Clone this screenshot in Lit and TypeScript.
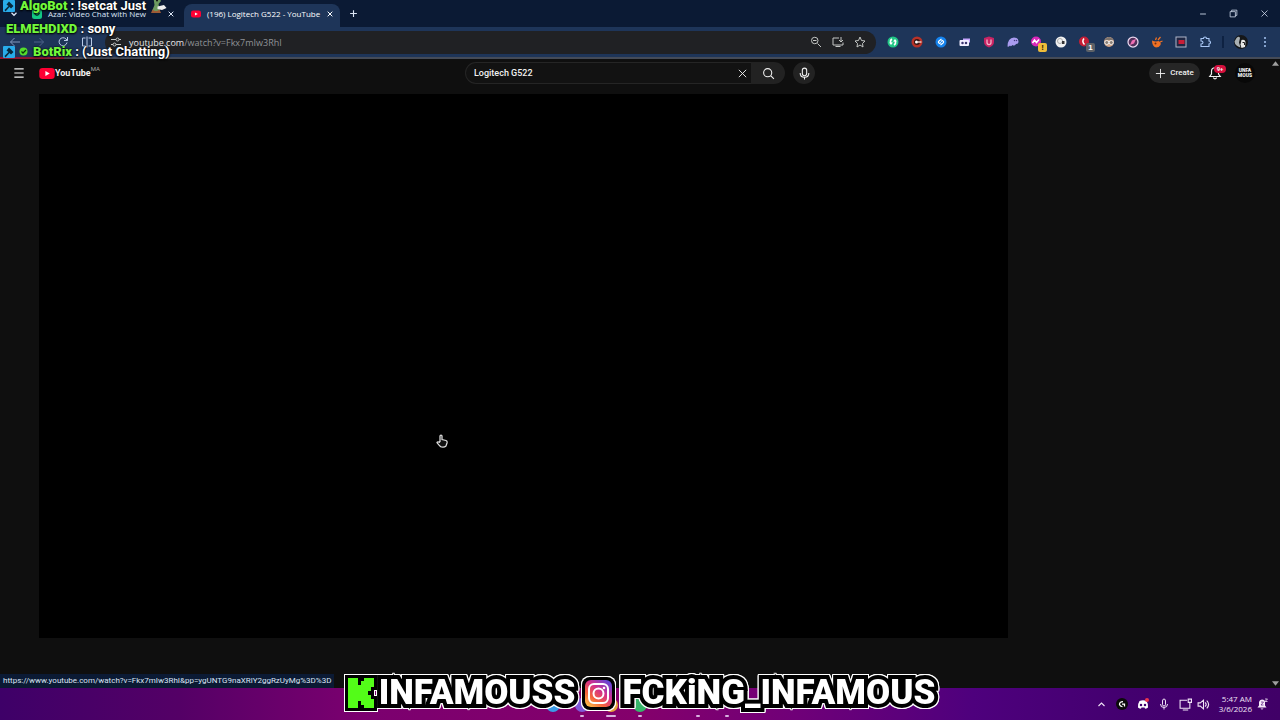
import { LitElement, html, css, svg } from "lit";
import { customElement } from "lit/decorators.js";

const line = (d: string, size = 12, view = 24, w = 2) => html`<svg
  class="line" width=${size} height=${size} viewBox="0 0 ${view} ${view}" stroke-width=${w} aria-hidden="true"
>${svg`<path d=${d} />`}</svg>`;

const play = (w: number, h: number) => html`<svg width=${w} height=${h} viewBox="0 0 28 20" aria-hidden="true">
  <rect width="28" height="20" rx="6" fill="#ff0033" /><path d="M11 5.500l8 4.500-8 4.500z" fill="#fff" /></svg>`;

const shapes = [
  { name: "Sync", art: svg`<circle cx="12" cy="12" r="11" fill="#21c786"/><path d="M10 6q-5 3-2 9M14 18q5-3 2-9" stroke="#fff" stroke-width="3" fill="none"/><path d="M4 13h8l-4 5zM12 11h8l-4-5z" fill="#fff"/>` },
  { name: "Recorder", art: svg`<circle cx="12" cy="12" r="11" fill="#b83228"/><circle cx="12" cy="12" r="6" fill="#301414"/><circle cx="11" cy="12" r="3" fill="#fff"/><path d="M12 12h9" stroke="#e9c9c5" stroke-width="3"/>` },
  { name: "Shazam", art: svg`<circle cx="12" cy="12" r="11" fill="#1583ee"/><path d="M13 6l-5 4q-3 3 1 5l3-2M11 18l5-4q3-3-1-5l-3 2" stroke="#fff" stroke-width="2.200" fill="none"/>` },
  { name: "Camera", art: svg`<path d="M8 5h14v8H8z" fill="#c7a6ff"/><rect x="1" y="8" width="19" height="12" rx="2" fill="#f2eeff"/><circle cx="7" cy="14" r="2.500" fill="#3a3470"/><circle cx="14" cy="14" r="2.500" fill="#3a3470"/>` },
  { name: "Shield", art: svg`<path d="M12 1l10 3v8q0 7-10 11Q2 19 2 12V4z" fill="#c82463"/><path d="M8 7v6q0 4 4 4t4-4V7" stroke="#f3b5cb" stroke-width="2.500" fill="none"/>` },
  { name: "Phantom", art: svg`<path d="M1 21Q1 4 14 3q9 0 9 8 0 5-5 5-3 5-7 2-3 4-5 1-2 3-5 2z" fill="#a99cf0"/><circle cx="15" cy="9" r="1.500" fill="#443a80"/><circle cx="19" cy="9" r="1.500" fill="#443a80"/>` },
  { name: "Monitor", art: svg`<circle cx="10" cy="11" r="10" fill="#d928b8"/><path d="M3 14l4-6 4 5 5-6" stroke="#fff" stroke-width="3" fill="none"/>`, tag: "!", tone: "warn" },
  { name: "Eyes", art: svg`<circle cx="12" cy="12" r="11" fill="#f1f1f1"/><circle cx="10" cy="10" r="5" fill="none" stroke="#aaa" stroke-width="2"/><path d="M14 10h5v6h-5z" fill="#333"/>` },
  { name: "Blocker", art: svg`<circle cx="10" cy="11" r="10" fill="#c51e36"/><path d="M10 5q-5 6 1 12" stroke="#fff" stroke-width="3" fill="none"/>`, tag: "1", tone: "count" },
  { name: "Glasses", art: svg`<circle cx="12" cy="12" r="10" fill="#d3a78a"/><path d="M3 8q9-12 18 0z" fill="#7c736d"/><circle cx="7.500" cy="13" r="4" fill="#8c8077" stroke="#eee" stroke-width="2"/><circle cx="16.500" cy="13" r="4" fill="#8c8077" stroke="#eee" stroke-width="2"/>` },
  { name: "Compass", art: svg`<circle cx="12" cy="12" r="10" fill="#53305b" stroke="#ead7ee" stroke-width="2.500"/><path d="M6 18l4-9 8-3-4 9z" fill="#ef6fb4"/>` },
  { name: "Fireball", art: svg`<path d="M2 9q7 3 13 1 6 2 4 8-3 5-9 5-8-2-8-14z" fill="#f07124"/><path d="M9 8l2-5M14 8l5-6M18 12l5-2" stroke="#f07124" stroke-width="2.500"/><circle cx="9" cy="15" r="2" fill="#6e2c10"/>` },
  { name: "Capture", art: svg`<rect x="2" y="2" width="20" height="20" fill="#202743" stroke="#aeb6c9" stroke-width="2"/><rect x="7" y="8" width="12" height="8" fill="#c91e37"/>` },
  { name: "Extensions", art: svg`<path d="M4 5h5q0-3 3-3t3 3h5v5q3 0 3 3t-3 3v5H4v-5q4 0 4-3t-4-3z" fill="none" stroke="#a9c7f5" stroke-width="2.200"/>` },
];

const pinned = ["blue", "violet open", "amber open wide", "green open", "", "open", "open"];

@customElement("app-root")
export class AppRoot extends LitElement {
  static styles = css`
    :host { display: flex; flex-direction: column; height: 100vh; position: relative; overflow: hidden;
      background: #0f0f0f; color: #f1f1f1; font-family: "Open Sans", "Noto Sans", sans-serif; }
    * { box-sizing: border-box; }
    button { all: unset; box-sizing: border-box; display: inline-flex; align-items: center; justify-content: center; cursor: pointer; flex: none; }
    svg { display: block; flex: none; }
    .line { fill: none; stroke: currentColor; }
    a { color: inherit; text-decoration: none; }

    .strip { display: flex; height: 27px; background: #0b1a34; color: #dce6f6; }
    .search-tabs { width: 27px; }
    .tab { display: flex; align-items: center; gap: 6px; width: 157px; padding: 0 9px 0 5px; font-size: 8px; white-space: nowrap; }
    .tab .title { flex: 1; }
    .tab.on { background: #1e3559; border-radius: 8px 8px 0 0; margin-top: 4px; padding: 0 7px 4px; width: 156px; color: #fff; }
    .new-tab { width: 26px; }
    .window { display: flex; margin-left: auto; }
    .window button { width: 31px; }

    .bar { display: flex; align-items: center; height: 30px; background: #1e3559; padding-right: 3px; color: #b8cbe8; }
    .bar button { width: 24px; height: 24px; position: relative; }
    .nav { display: flex; width: 105px; padding-left: 3px; }
    .bar .back { color: #8298bd; }
    .bar .dim { color: #4d6389; }
    .omni { display: flex; align-items: center; flex: 1; min-width: 0; height: 23px; border-radius: 12px; background: #202124; color: #c4c7c5; padding-right: 5px; margin-right: 5px; }
    .omni button { width: 22px; }
    .address { flex: 1; min-width: 0; font-size: 9px; color: #8f9296; padding-left: 2px; }
    .address b { font-weight: 400; color: #e6e7e8; }
    .tag { position: absolute; right: 2px; bottom: 2px; width: 9px; height: 9px; border-radius: 2px; font: 700 8px/9px "Liberation Sans", sans-serif; text-align: center; }
    .warn { background: #f0bd3a; color: #332500; }
    .count { background: #5d6167; color: #fff; }
    .rule { width: 2px; height: 12px; background: #0e2242; margin: 0 5px; }
    .loading { height: 2px; background: linear-gradient(90deg, #8e1832 64px, #454b57 64px); }

    .page { flex: 1; min-height: 0; position: relative; font-family: Roboto, sans-serif; }
    .mast { display: grid; grid-template-columns: 1fr auto 1fr; align-items: center; height: 35px; padding: 0 25px 7px 12px; }
    .left, .right { display: flex; align-items: center; }
    .left { gap: 13px; }
    .brand { display: flex; align-items: center; font: 700 9px/14px "Roboto", sans-serif; }
    .brand sup { font-size: 6px; line-height: 6px; font-weight: 400; color: #aaa; align-self: flex-start; }
    .find { display: flex; align-items: center; margin-left: 13px; }
    .field { display: flex; width: 286px; height: 22px; border: 1px solid #252525; border-right: 0; border-radius: 11px 0 0 11px; background: #121212; padding-right: 2px; }
    .field input { flex: 1; min-width: 0; background: none; border: 0; outline: 0; color: #f1f1f1; font: 500 9px/20px Roboto, sans-serif; padding: 0 0 0 8px; }
    .field button { width: 14px; }
    .go { width: 34px; height: 22px; background: #222; border-radius: 0 11px 11px 0; }
    .mic { width: 22px; height: 22px; border-radius: 11px; background: #222; margin-left: 8px; }
    .right { justify-content: flex-end; gap: 6px; }
    .create { height: 20px; width: 51px; gap: 4px; border-radius: 10px; background: #262626; font: 500 8px/20px Roboto, sans-serif; }
    .bell { width: 18px; height: 20px; position: relative; margin-right: 5px; }
    .bell span { position: absolute; left: 8px; top: 2px; width: 12px; height: 8px; border-radius: 4px; background: #d5103d; font: 700 6px/8px Roboto, sans-serif; text-align: center; }
    .me { width: 20px; height: 20px; border-radius: 10px; background: #080808; font: 900 5px/5px Roboto, sans-serif; text-align: center; }
    .video { width: calc(100% - 311px); aspect-ratio: 969 / 544; margin-left: 39px; background: #000; }
    .scroll { position: absolute; right: 0; top: 0; bottom: 0; width: 10px; padding: 2px 0; display: flex; flex-direction: column; justify-content: space-between; align-items: center; }
    .status { position: absolute; left: 0; bottom: 0; background: #0b1a34; color: #dbe5f4; padding: 0 3px; font: 8px/14px Roboto, sans-serif; white-space: nowrap; }

    .task { display: flex; justify-content: flex-end; align-items: center; height: 32px; position: relative; padding-right: 10px;
      background: linear-gradient(90deg, #3e0068, #540066 14%, #7b006f 28%, #84006b 50%, #700078 62%, #4e007d 76%, #43006f 88%, #400067); color: #f0e3f6; }
    .task button { width: 21px; height: 24px; }
    .task .slim { width: 16px; }
    .clock { font-size: 8px; line-height: 10px; text-align: right; margin: 0 2px 0 7px; }
    .clock span { display: block; }
    .pins { position: absolute; inset: 0; display: flex; justify-content: center; }
    .task .pin { width: 29px; height: 32px; flex-direction: column; justify-content: flex-end; gap: 3px; padding-bottom: 3px; }
    .pin::before { content: ""; width: 14px; height: 14px; border-radius: 7px; }
    .pin::after { content: ""; width: 4px; height: 2px; border-radius: 1px; }
    .open::after { background: #d9b3e0; }
    .wide::after { width: 10px; }
    .blue::before { background: #3a9be8; }
    .violet::before { background: #8059d8; }
    .amber::before { background: #e5a13c; }
    .green::before { background: #36b56a; }

    .chat { position: absolute; left: 3px; top: -6px; font: 700 13px/23px Roboto, sans-serif; color: #fff; text-shadow: 0 1px 2px #000, 0 0 2px #000; }
    .chat p { display: flex; align-items: center; gap: 4px; margin: 0; white-space: nowrap; }
    .chat .plain { padding-left: 3px; }
    .chat b { color: #72f83c; }
    .chat .far { margin-left: 1px; }
    .banner { position: absolute; left: 0; right: 0; bottom: 7px; display: flex; justify-content: center; align-items: center;
      font: 900 35px/40px Roboto, sans-serif; color: #fff;
      filter: drop-shadow(1px 0 #fff) drop-shadow(-1px 0 #fff) drop-shadow(0 1px #fff) drop-shadow(0 -1px #fff); }
    .banner span { -webkit-text-stroke: 8px #000; paint-order: stroke fill; stroke-linejoin: round; }
    .banner .gram { margin: 0 6px; }
    .banner .kick { margin-right: 2px; }
    .cursor { position: absolute; left: 436px; top: 434px; }
  `;

  private hammer() {
    return html`<svg width="12" height="12" viewBox="0 0 24 24" aria-hidden="true"><rect width="24" height="24" rx="2" fill="#28abea"/><path d="M3 20l8-8-4-3 5-6 9 9-5 5-3-3-8 9z" fill="#08283d"/></svg>`;
  }

  render() {
    return html`
      <header class="strip">
        <button class="search-tabs" aria-label="Search tabs">${line("M6 9l6 6 6-6", 10, 24, 3)}</button>
        <div class="tab">
          <svg width="10" height="10" viewBox="0 0 20 20" aria-hidden="true"><rect width="20" height="20" rx="5" fill="#12c984"/><path d="M5 8q5 9 10 0" fill="none" stroke="#073c29" stroke-width="3"/></svg>
          <span class="title">Azar: Video Chat with New</span>
          <button aria-label="Close tab">${line("M5 5l14 14M19 5L5 19", 8, 24, 3)}</button>
        </div>
        <div class="tab on">
          ${play(10, 8)}
          <span class="title">(196) Logitech G522 - YouTube</span>
          <button aria-label="Close tab">${line("M5 5l14 14M19 5L5 19", 8, 24, 3)}</button>
        </div>
        <button class="new-tab" aria-label="New tab">${line("M12 3v18M3 12h18", 9, 24, 3)}</button>
        <div class="window">
          <button aria-label="Minimize">${line("M5 12h14", 10)}</button>
          <button aria-label="Restore">${line("M3 7h14v14H3zM7 7V3h14v14h-4", 9)}</button>
          <button aria-label="Close">${line("M4 4l16 16M20 4L4 20", 9)}</button>
        </div>
      </header>
      <div class="bar">
        <nav class="nav">
          <button class="back" aria-label="Back">${line("M22 12H3M11 4l-8 8 8 8")}</button>
          <button class="dim" aria-label="Forward">${line("M2 12h19M13 4l8 8-8 8")}</button>
          <button aria-label="Reload">${line("M20 13a8 8 0 1 1-2-7l3 3M21 2v7h-7")}</button>
          <button aria-label="Split view">${line("M9 4H3v16h6M15 4h6v16h-6M12 1v22")}</button>
        </nav>
        <div class="omni">
          <button aria-label="Site information">${line("M2 7h10M18 7h4M2 17h4M12 17h10M12 7a3 3 0 1 0 6 0 3 3 0 1 0-6 0M6 17a3 3 0 1 0 6 0 3 3 0 1 0-6 0")}</button>
          <span class="address"><b>youtube.com</b>/watch?v=Fkx7mIw3RhI</span>
          <button aria-label="Zoom">${line("M15 15l7 7M3 9a6.500 6.500 0 1 0 13 0 6.500 6.500 0 1 0-13 0M6 9h7")}</button>
          <button aria-label="Install">${line("M14 4H2v14h20v-5M7 21h10M18 2v9M14 8l4 4 4-4")}</button>
          <button aria-label="Bookmark">${line("M12 2l3 7 7 1-5 5 1 7-6-4-6 4 1-7-5-5 7-1z")}</button>
        </div>
        ${shapes.map((s) => html`<button aria-label=${s.name}><svg width="12" height="12" viewBox="0 0 24 24">${s.art}</svg>${s.tag ? html`<span class="tag ${s.tone}">${s.tag}</span>` : ""}</button>`)}
        <span class="rule"></span>
        <button aria-label="Profile"><svg width="14" height="14" viewBox="0 0 28 28"><circle cx="14" cy="14" r="14" fill="#151719"/><path d="M5 6q5-5 7 0l-2 9 3 10Q2 22 1 13z" fill="#a9b0b3"/><path d="M15 10q7-2 8 4l-1 10-7 2-2-7z" fill="#e9e9e7"/><path d="M17 15h4v5" stroke="#222" stroke-width="2" fill="none"/></svg></button>
        <button aria-label="Menu"><svg width="12" height="12" viewBox="0 0 24 24" fill="#a9c7f5"><circle cx="12" cy="4" r="2"/><circle cx="12" cy="12" r="2"/><circle cx="12" cy="20" r="2"/></svg></button>
      </div>
      <div class="loading"></div>

      <main class="page">
        <div class="mast">
          <div class="left">
            <button aria-label="Guide">${line("M4 5h16M4 12h16M4 19h16", 14)}</button>
            <a class="brand" href="#" aria-label="YouTube home">${play(16, 11)}<span>YouTube</span><sup>MA</sup></a>
          </div>
          <form class="find" @submit=${(e: Event) => e.preventDefault()}>
            <div class="field">
              <input aria-label="Search" .value=${"Logitech G522"} />
              <button type="button" aria-label="Clear">${line("M4 4l16 16M20 4L4 20", 11)}</button>
            </div>
            <button class="go" aria-label="Search">${line("M16 16l6 6M3 10.500a7.500 7.500 0 1 0 15 0 7.500 7.500 0 1 0-15 0", 13)}</button>
            <button type="button" class="mic" aria-label="Search with your voice">${line("M12 2q4 0 4 4v6q0 4-4 4t-4-4V6q0-4 4-4M4 11q0 8 8 8t8-8M12 19v4", 13)}</button>
          </form>
          <div class="right">
            <button class="create">${line("M12 2v20M2 12h20", 11)}Create</button>
            <button class="bell" aria-label="Notifications">${line("M3 18h18l-3-4V9q0-6-6-6T6 9v5zM9 20q3 4 6 0", 14)}<span>9+</span></button>
            <button class="me" aria-label="Account">UNFA<br />MOUS</button>
          </div>
        </div>
        <div class="video"></div>
        <div class="scroll">
          <svg width="7" height="5" viewBox="0 0 8 5"><path d="M4 0l4 5H0z" fill="#9f9f9f"/></svg>
          <svg width="7" height="5" viewBox="0 0 8 5"><path d="M0 0h8L4 5z" fill="#9f9f9f"/></svg>
        </div>
        <div class="status">https://www.youtube.com/watch?v=Fkx7mIw3RhI&amp;pp=ygUNTG9naXRlY2ggRzUyMg%3D%3D</div>
      </main>

      <footer class="task">
        <div class="pins">${pinned.map((p) => html`<button class="pin ${p}" aria-label="Pinned app"></button>`)}</div>
        <button aria-label="Hidden icons">${line("M4 16l8-8 8 8", 9, 24, 3)}</button>
        <button aria-label="G Hub"><svg width="12" height="12" viewBox="0 0 24 24"><circle cx="12" cy="12" r="12" fill="#0b0b0b"/><path d="M14 7q-7 0-7 6 1 4 6 4M12 12h5v5" fill="none" stroke="#fff" stroke-width="2.500"/></svg></button>
        <button aria-label="Discord"><svg width="12" height="12" viewBox="0 0 24 24"><path d="M5 6q7-3 14 0 4 6 3 13-3 3-6 2l-1-2H9l-1 2q-3 1-6-2Q1 12 5 6z" fill="#fff"/><circle cx="8" cy="14" r="2.500" fill="#42006e"/><circle cx="16" cy="14" r="2.500" fill="#42006e"/><circle cx="20" cy="4" r="4" fill="#ed344c"/></svg></button>
        <button aria-label="Microphone">${line("M12 2q3 0 3 4v7q0 3-3 3t-3-3V6q0-4 3-4M5 12q0 7 7 7t7-7M12 19v4", 12)}</button>
        <button aria-label="Network">${line("M15 4H2v15h18v-6M7 22h10M17 2h6v6h-6zM20 8v5", 13)}</button>
        <button class="slim" aria-label="Volume">${line("M2 9h4l6-5v16l-6-5H2zM15 8q4 4 0 8M18 5q7 7 0 14", 13)}</button>
        <div class="clock"><span>5:47 AM</span><span>3/6/2026</span></div>
        <button class="slim" aria-label="Notifications"><svg width="12" height="12" viewBox="0 0 24 24"><path d="M3 19l3-4V8q1-5 6-5 6 0 6 5v7l3 4zM9 21h6q-3 4-6 0" fill="#f6ecfa"/><path d="M10 8h5l-5 6h5" stroke="#5b2080" stroke-width="1.500" fill="none"/><path d="M18 2h5l-5 5h5" stroke="#f6ecfa" stroke-width="1.500" fill="none"/></svg></button>
      </footer>

      <aside class="chat">
        <p>${this.hammer()}<span class="far"><b>AlgoBot</b> : !setcat Just</span>
          <svg width="17" height="18" viewBox="0 0 34 36" aria-hidden="true"><path d="M7 2h12l3 6-5 6 3 14H4l5-12z" fill="#6d9b60"/><path d="M5 25q7 6 14 0l3 7H2z" fill="#9d5b35"/><path d="M15 19l13-3 5 6-9 4-9-2z" fill="#eee"/><circle cx="14" cy="7" r="2" fill="#111"/></svg></p>
        <p class="plain"><span><b>ELMEHDIXD</b> : sony</span></p>
        <p>${this.hammer()}<svg width="9" height="9" viewBox="0 0 18 18" aria-hidden="true"><circle cx="9" cy="9" r="8" fill="#54dc2c"/><path d="M5 9l3 3 6-6" stroke="#083509" stroke-width="2.500" fill="none"/></svg><span class="far"><b>BotRix</b> : (Just Chatting)</span></p>
      </aside>

      <div class="banner">
        <svg class="kick" width="32" height="36" viewBox="0 0 32 36" role="img" aria-label="Kick"><path d="M3 3h10v7h3V6h3V3h10v9h-3v4h-3v4h3v4h3v9H19v-3h-3v-4h-3v7H3z" fill="#53fc18" stroke="#000" stroke-width="6" paint-order="stroke"/></svg>
        <span>INFAMOUSS</span>
        <svg class="gram" width="35" height="35" viewBox="0 0 35 35" role="img" aria-label="Instagram">
          <defs>
            <linearGradient id="a" x1="0" y1="1" x2="0.800" y2="0"><stop offset="0" stop-color="#ffd34f"/><stop offset=".35" stop-color="#f5653b"/><stop offset=".65" stop-color="#d32f8c"/><stop offset="1" stop-color="#6446d8"/></linearGradient>
          </defs>
          <rect x="1" y="1" width="33" height="33" rx="8" fill="#000"/><rect x="4" y="4" width="27" height="27" rx="6" fill="url(#a)"/>
          <g fill="none" stroke="#fff" stroke-width="2"><rect x="8" y="8" width="19" height="19" rx="5"/><circle cx="17.500" cy="17.500" r="5"/></g><circle cx="23" cy="12" r="1.300" fill="#fff"/>
        </svg>
        <span>FCKiNG_INFAMOUS</span>
      </div>
      <svg class="cursor" width="12" height="14" viewBox="0 0 24 28" aria-hidden="true"><path d="M8 16V4q0-2 2-2t2 2v7l8 2q3 1 2 5l-2 6q-3 3-9 2-3-1-9-9 1-3 6 0" fill="#111" stroke="#ddd" stroke-width="2.500"/></svg>
    `;
  }
}
